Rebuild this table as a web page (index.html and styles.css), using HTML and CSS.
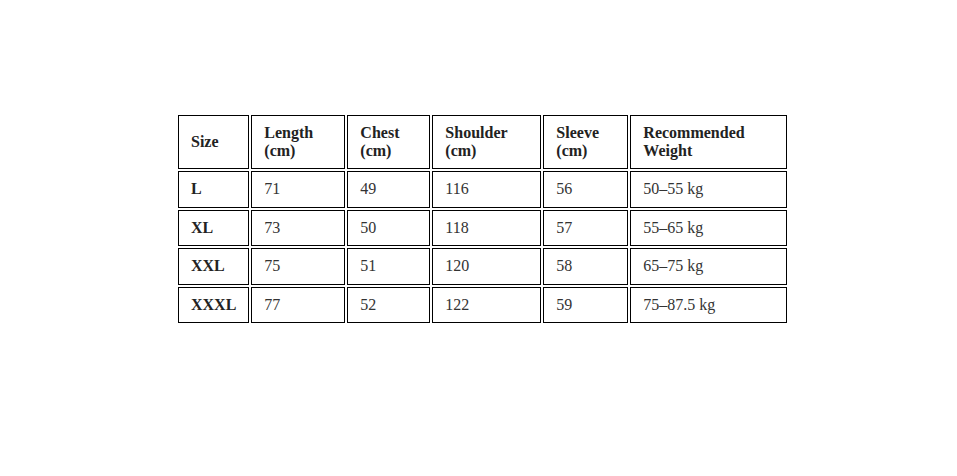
FILE: index.html
```html
<!DOCTYPE html>
<html>
<head>
<meta charset="utf-8">
<link rel="stylesheet" href="styles.css">
</head>
<body>
<div class="page">
<table class="size-table">
  <thead>
    <tr>
      <th class="c-size">Size</th>
      <th class="c-len">Length<br>(cm)</th>
      <th class="c-chest">Chest<br>(cm)</th>
      <th class="c-sh">Shoulder<br>(cm)</th>
      <th class="c-sl">Sleeve<br>(cm)</th>
      <th class="c-wt">Recommended<br>Weight</th>
    </tr>
  </thead>
  <tbody>
    <tr><th>L</th><td>71</td><td>49</td><td>116</td><td>56</td><td>50–55 kg</td></tr>
    <tr><th>XL</th><td>73</td><td>50</td><td>118</td><td>57</td><td>55–65 kg</td></tr>
    <tr><th>XXL</th><td>75</td><td>51</td><td>120</td><td>58</td><td>65–75 kg</td></tr>
    <tr><th>XXXL</th><td>77</td><td>52</td><td>122</td><td>59</td><td>75–87.5 kg</td></tr>
  </tbody>
</table>
</div>
</body>
</html>
```

FILE: styles.css
```css
html, body {
  margin: 0;
  padding: 0;
  background: #ffffff;
}
.page {
  padding: 113px 0 0 176px;
}
.size-table {
  border-collapse: separate;
  border-spacing: 2px;
  font-family: "Liberation Serif", "Times New Roman", serif;
  font-size: 16px;
  line-height: 18px;
  color: #333333;
}
.size-table th,
.size-table td {
  box-sizing: border-box;
  border: 1px solid #000000;
  padding: 8px 12px;
  text-align: left;
  vertical-align: middle;
}
.size-table th {
  font-weight: bold;
  color: #222222;
}
.size-table tbody th,
.size-table tbody td {
  height: 36.5px;
}
.size-table thead th {
  height: 54px;
}
.c-size { width: 71px; }
.c-len { width: 94px; }
.c-chest { width: 83px; }
.c-sh { width: 109px; }
.c-sl { width: 85px; }
.c-wt { width: 157px; }
```
